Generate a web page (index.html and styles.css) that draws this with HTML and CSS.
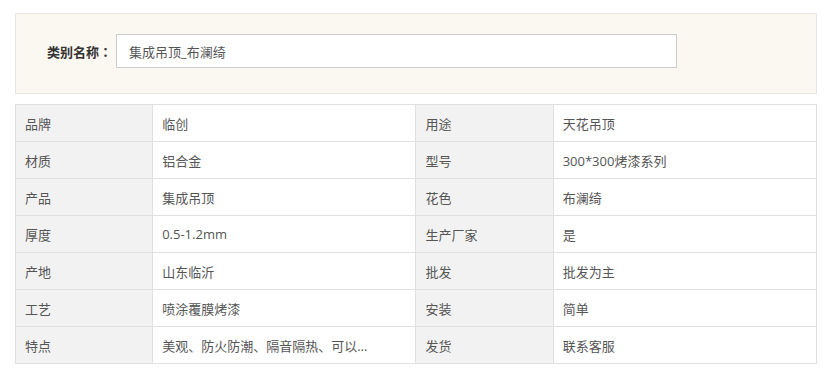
FILE: index.html
```html
<!DOCTYPE html>
<html lang="zh-CN">
<head>
<meta charset="utf-8">
<title>类别</title>
<link rel="stylesheet" href="styles.css">
</head>
<body>
<div class="page">
  <div class="filter">
    <span class="filter-label">类别名称<span class="colon" lang="ja">：</span></span>
    <div class="filter-input">集成吊顶_布澜绮</div>
  </div>
  <table class="attrs">
    <tr><td class="k">品牌</td><td class="v">临创</td><td class="k">用途</td><td class="v">天花吊顶</td></tr>
    <tr><td class="k">材质</td><td class="v">铝合金</td><td class="k">型号</td><td class="v">300*300烤漆系列</td></tr>
    <tr><td class="k">产品</td><td class="v">集成吊顶</td><td class="k">花色</td><td class="v">布澜绮</td></tr>
    <tr><td class="k">厚度</td><td class="v">0.5-1.2mm</td><td class="k">生产厂家</td><td class="v">是</td></tr>
    <tr><td class="k">产地</td><td class="v">山东临沂</td><td class="k">批发</td><td class="v">批发为主</td></tr>
    <tr><td class="k">工艺</td><td class="v">喷涂覆膜烤漆</td><td class="k">安装</td><td class="v">简单</td></tr>
    <tr><td class="k">特点</td><td class="v">美观、防火防潮、隔音隔热、可以...</td><td class="k">发货</td><td class="v">联系客服</td></tr>
  </table>
</div>
</body>
</html>
```
FILE: styles.css
```css
html, body {
  margin: 0;
  padding: 0;
  background: #fff;
}
body {
  font-family: "Open Sans", "Noto Sans CJK SC", "Noto Sans", sans-serif;
  font-size: 13px;
  color: #333;
}
.page {
  padding: 13px 17px 0 15px;
}
.filter {
  background: #fbf8f1;
  border: 1px solid #e8e6e1;
  display: flex;
  align-items: center;
  padding: 0 0 5px 31px;
  box-sizing: border-box;
  height: 81px;
}
.filter-label {
  font-weight: bold;
  color: #333;
  width: 69px;
  white-space: nowrap;
}
.colon {
  font-family: "Noto Sans CJK JP", "Noto Sans CJK SC", sans-serif;
}
.filter-input {
  width: 561px;
  height: 34px;
  box-sizing: border-box;
  border: 1px solid #cccccc;
  background: #fff;
  padding-left: 12px;
  display: flex;
  align-items: center;
  color: #555;
}
.attrs {
  margin-top: 10px;
  width: 802px;
  border-collapse: collapse;
  table-layout: fixed;
}
.attrs td {
  height: 37px;
  border: 1px solid #e0e0e0;
  padding: 0 0 0 9px;
  box-sizing: border-box;
  color: #555;
  white-space: nowrap;
  overflow: hidden;
}
.attrs td.k {
  width: 137px;
  background: #f2f2f2;
  color: #555;
}
.attrs td.v {
  width: 263px;
  background: #fff;
}
```
